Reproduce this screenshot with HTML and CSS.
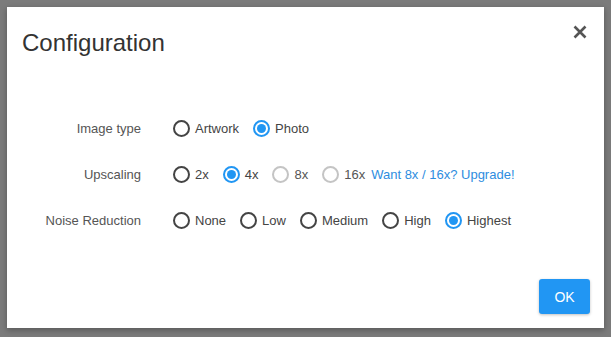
FILE: index.html
```html
<!DOCTYPE html>
<html lang="en">
<head>
  <meta charset="UTF-8" />
  <title>Configuration</title>
  <link rel="stylesheet" href="styles.css">
</head>
<body>

<div class="backdrop">
  <div class="modal">
    <div class="modal-header">
      <div class="modal-title">Configuration</div>
      <button type="button" class="btn-close" aria-label="Close">
        <svg width="14" height="14" viewBox="0 0 14 14">
          <path d="M1.5 1.5 L12.5 12.5 M12.5 1.5 L1.5 12.5" stroke="#555" stroke-width="2.6" fill="none"/>
        </svg>
      </button>
    </div>

    <form class="modal-body">
      <!-- Image type -->
      <div class="row">
        <div class="row-label">Image type</div>
        <div class="options">
          <label><input type="radio" name="type" value="artwork"> Artwork</label>
          <label><input type="radio" name="type" value="photo" checked> Photo</label>
        </div>
      </div>

      <!-- Upscaling -->
      <div class="row">
        <div class="row-label">Upscaling</div>
        <div class="options">
          <label><input type="radio" name="scale" value="2"> 2x</label>
          <label><input type="radio" name="scale" value="4" checked> 4x</label>
          <label class="disabled"><input type="radio" name="scale" value="8" disabled> 8x</label>
          <label class="disabled"><input type="radio" name="scale" value="16" disabled> 16x</label>
          <a class="upgrade" href="#">Want 8x / 16x? Upgrade!</a>
        </div>
      </div>

      <!-- Noise reduction -->
      <div class="row">
        <div class="row-label">Noise Reduction</div>
        <div class="options">
          <label><input type="radio" name="noise" value="none"> None</label>
          <label><input type="radio" name="noise" value="low"> Low</label>
          <label><input type="radio" name="noise" value="medium"> Medium</label>
          <label><input type="radio" name="noise" value="high"> High</label>
          <label><input type="radio" name="noise" value="highest" checked> Highest</label>
        </div>
      </div>
    </form>

    <div class="modal-footer">
      <button type="button" class="btn-ok">OK</button>
    </div>
  </div>
</div>

</body>
</html>
```

FILE: styles.css
```css
body {
  margin: 0;
  font-family: "Liberation Sans", Arial, sans-serif;
  background-color: #7b7b7b;
}

.backdrop {
  height: 337px;
  padding: 7px;
  box-sizing: border-box;
}

.modal {
  width: 597px;
  height: 321px;
  background-color: #fff;
  display: flex;
  flex-direction: column;
  box-shadow: 0 2px 6px rgba(0, 0, 0, 0.3);
}

.modal-header {
  display: flex;
  justify-content: space-between;
  align-items: flex-start;
  padding: 22px 17px 0 15px;
}

.modal-title {
  font-size: 24px;
  line-height: 28px;
  color: #333;
}

.btn-close {
  border: none;
  background: none;
  padding: 0;
  margin-top: -4px;
  display: flex;
  cursor: pointer;
}

.modal-body {
  flex: 1;
  padding-top: 60px;
  display: flex;
  flex-direction: column;
  gap: 24px;
}

.row {
  display: flex;
  align-items: center;
  height: 22px;
  font-size: 13px;
}

.row-label {
  width: 134px;
  text-align: right;
  color: #555;
}

.options {
  display: flex;
  align-items: center;
  gap: 14px;
  margin-left: 32px;
}

label {
  display: flex;
  align-items: center;
  gap: 5px;
  color: #444;
  cursor: pointer;
}

input[type="radio"] {
  appearance: none;
  -webkit-appearance: none;
  margin: 0;
  width: 17px;
  height: 17px;
  border: 2px solid #444;
  border-radius: 50%;
  box-sizing: border-box;
  display: flex;
  align-items: center;
  justify-content: center;
}

input[type="radio"]:checked {
  border-color: #2196f3;
}

input[type="radio"]:checked::after {
  content: "";
  width: 9px;
  height: 9px;
  border-radius: 50%;
  background-color: #2196f3;
}

.disabled {
  color: #555;
}

.disabled input[type="radio"] {
  border-color: #c4c4c4;
}

.upgrade {
  margin-left: -8px;
  color: #2e8de0;
  text-decoration: none;
}

.modal-footer {
  display: flex;
  justify-content: flex-end;
  padding: 0 14px 14px 0;
}

.btn-ok {
  width: 51px;
  height: 35px;
  border: none;
  border-radius: 3px;
  background-color: #2196f3;
  color: #fff;
  font-family: "Liberation Sans", Arial, sans-serif;
  font-size: 14px;
  box-shadow: 0 1px 3px rgba(0, 0, 0, 0.25);
  cursor: pointer;
}
```
